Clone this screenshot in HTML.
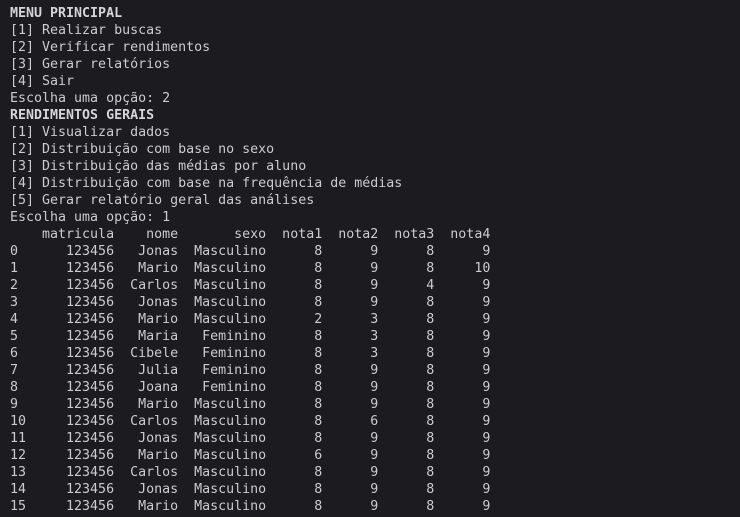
<!DOCTYPE html>
<html><head><meta charset="utf-8"><style>
html,body{margin:0;padding:0;background:#1b1b20;width:740px;height:517px;overflow:hidden}
pre{margin:0;position:absolute;left:10px;top:5px;font-family:"DejaVu Sans Mono","Liberation Mono",monospace;font-size:13.3px;line-height:17px;color:#cccccc}
b{color:#d6d6d6}
</style></head><body><pre><b>MENU PRINCIPAL</b>
[1] Realizar buscas
[2] Verificar rendimentos
[3] Gerar relatórios
[4] Sair
Escolha uma opção: 2
<b>RENDIMENTOS GERAIS</b>
[1] Visualizar dados
[2] Distribuição com base no sexo
[3] Distribuição das médias por aluno
[4] Distribuição com base na frequência de médias
[5] Gerar relatório geral das análises
Escolha uma opção: 1
    matricula    nome       sexo  nota1  nota2  nota3  nota4
0      123456   Jonas  Masculino      8      9      8      9
1      123456   Mario  Masculino      8      9      8     10
2      123456  Carlos  Masculino      8      9      4      9
3      123456   Jonas  Masculino      8      9      8      9
4      123456   Mario  Masculino      2      3      8      9
5      123456   Maria   Feminino      8      3      8      9
6      123456  Cibele   Feminino      8      3      8      9
7      123456   Julia   Feminino      8      9      8      9
8      123456   Joana   Feminino      8      9      8      9
9      123456   Mario  Masculino      8      9      8      9
10     123456  Carlos  Masculino      8      6      8      9
11     123456   Jonas  Masculino      8      9      8      9
12     123456   Mario  Masculino      6      9      8      9
13     123456  Carlos  Masculino      8      9      8      9
14     123456   Jonas  Masculino      8      9      8      9
15     123456   Mario  Masculino      8      9      8      9</pre></body></html>
